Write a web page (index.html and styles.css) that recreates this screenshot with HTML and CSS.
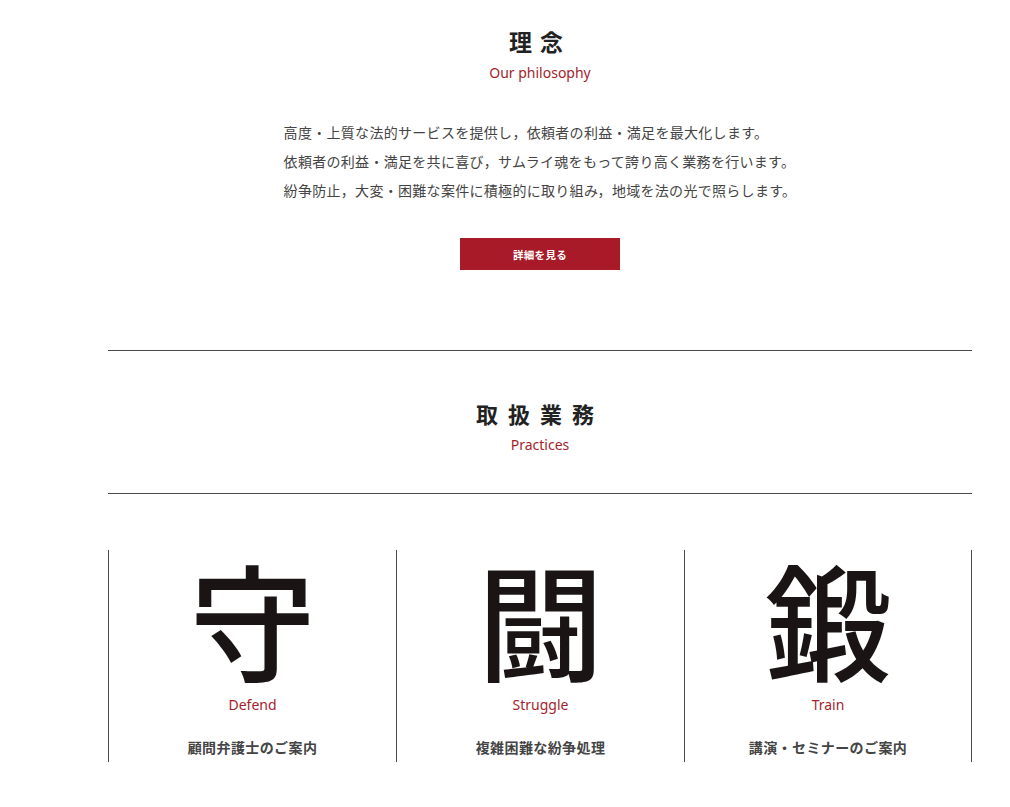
FILE: index.html
```html
<!DOCTYPE html>
<html lang="ja">
<head>
<meta charset="utf-8">
<title>理念・取扱業務</title>
<link rel="stylesheet" href="styles.css">
</head>
<body>
<main class="page">
  <section class="philosophy">
    <h2 class="heading">理念</h2>
    <p class="sub">Our philosophy</p>
    <div class="lead">
      <p>高度・上質な法的サービスを提供し，依頼者の利益・満足を最大化します。</p>
      <p>依頼者の利益・満足を共に喜び，サムライ魂をもって誇り高く業務を行います。</p>
      <p>紛争防止，大変・困難な案件に積極的に取り組み，地域を法の光で照らします。</p>
    </div>
    <a class="btn" href="#">詳細を見る</a>
  </section>

  <section class="practices">
    <div class="practices-head">
      <h2 class="heading heading-wide">取扱業務</h2>
      <p class="sub">Practices</p>
    </div>
    <div class="cols">
      <div class="col">
        <div class="kanji">守</div>
        <p class="col-en">Defend</p>
        <p class="col-ja">顧問弁護士のご案内</p>
      </div>
      <div class="col">
        <div class="kanji">闘</div>
        <p class="col-en">Struggle</p>
        <p class="col-ja">複雑困難な紛争処理</p>
      </div>
      <div class="col">
        <div class="kanji">鍛</div>
        <p class="col-en">Train</p>
        <p class="col-ja">講演・セミナーのご案内</p>
      </div>
    </div>
  </section>
</main>
</body>
</html>
```
FILE: styles.css
```css
* { box-sizing: border-box; }
html, body { margin: 0; padding: 0; background: #fff; }
body {
  font-family: "Noto Sans CJK JP", "Noto Sans", sans-serif;
  color: #333;
}
p, h2 { margin: 0; }

.page {
  width: 864px;
  margin: 0 auto 0 108px;
}

.philosophy {
  display: flex;
  flex-direction: column;
  align-items: center;
  padding-top: 25px;
  padding-bottom: 80px;
  border-bottom: 1px solid #4a4a4a;
}

.heading {
  font-size: 23px;
  line-height: 32px;
  font-weight: 700;
  letter-spacing: 8px;
  color: #222;
}

.sub {
  font-family: "Noto Sans", sans-serif;
  font-size: 14px;
  line-height: 20px;
  color: #a51e2c;
  margin-top: 6px;
}

.lead {
  margin-top: 35px;
  font-size: 14px;
  line-height: 29px;
  color: #444;
  letter-spacing: 0.3px;
  text-spacing-trim: space-all;
  font-feature-settings: "fwid" 1;
}

.btn {
  display: flex;
  align-items: center;
  justify-content: center;
  width: 160px;
  height: 32px;
  margin-top: 33px;
  background: #a81a27;
  color: #fff;
  font-size: 10.5px;
  font-weight: 700;
  text-decoration: none;
  letter-spacing: 0.03em;
}

.practices-head {
  display: flex;
  flex-direction: column;
  align-items: center;
  padding-top: 46px;
  padding-bottom: 38px;
  border-bottom: 1px solid #4a4a4a;
}

.heading-wide { font-size: 22px; letter-spacing: 10px; }

.cols {
  display: grid;
  grid-template-columns: repeat(3, 1fr);
  margin-top: 56px;
}

.col {
  display: flex;
  flex-direction: column;
  align-items: center;
  border-left: 1px solid #4a4a4a;
  height: 212px;
}
.col:last-child { border-right: 1px solid #4a4a4a; }

.kanji {
  font-size: 126px;
  line-height: 130px;
  font-weight: 500;
  color: #1a1414;
  margin-top: 2px;
}

.col-en {
  font-family: "Noto Sans", sans-serif;
  font-size: 14px;
  line-height: 20px;
  color: #a51e2c;
  margin-top: 13px;
}

.col-ja {
  font-size: 14px;
  line-height: 20px;
  font-weight: 700;
  color: #444;
  letter-spacing: 0.4px;
  margin-top: 22px;
}
```
